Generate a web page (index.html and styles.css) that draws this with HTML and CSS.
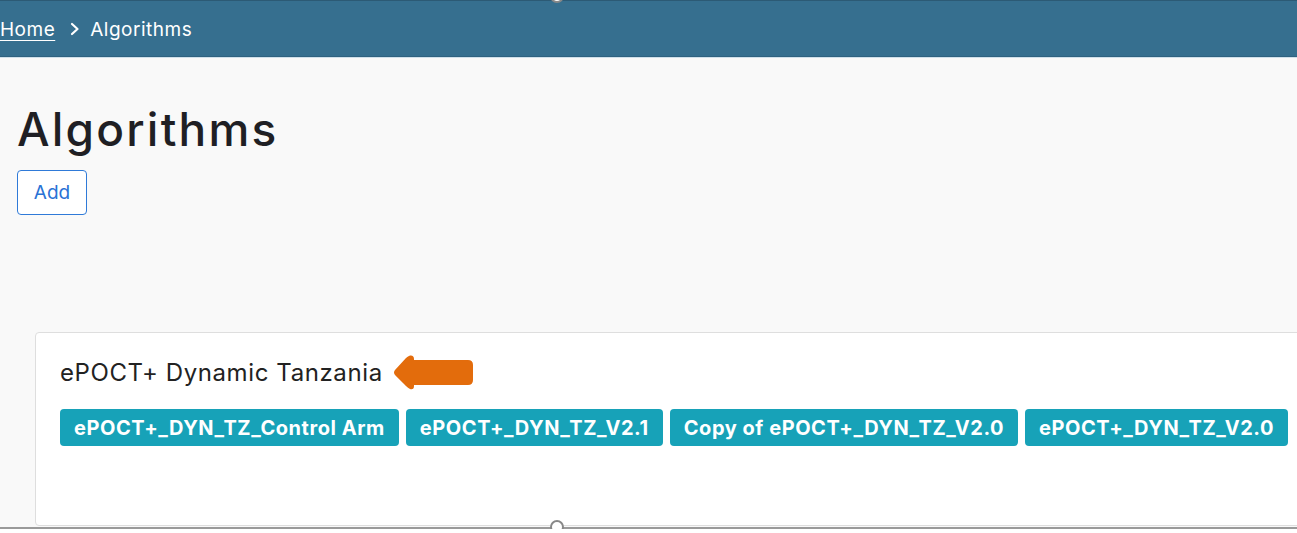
FILE: index.html
```html
<!DOCTYPE html>
<html lang="en">

<head>
    <meta charset="UTF-8">
    <meta name="viewport" content="width=device-width, initial-scale=1.0">
    <title>Algorithms</title>
    <link rel="stylesheet" href="styles.css">
</head>

<body>
    <div class="frame">
        <nav class="topbar">
            <a class="crumb-link" href="#">Home</a>
            <span class="crumb-sep">
                <svg width="12" height="14" viewBox="0 0 12 14">
                    <path d="M3 2 L8.5 7 L3 12" fill="none" stroke="#fff" stroke-width="2.2" stroke-linecap="round" stroke-linejoin="round" />
                </svg>
            </span>
            <span class="crumb-current">Algorithms</span>
        </nav>

        <main class="content">
            <h1 class="page-title">Algorithms</h1>
            <button class="btn-outline">Add</button>

            <section class="card">
                <div class="card-head">
                    <h2 class="card-title">ePOCT+ Dynamic Tanzania</h2>
                    <svg class="pointer" width="82" height="38" viewBox="0 0 82 38">
                        <path d="M22 7 L76 7 Q81 7 81 12 L81 27 Q81 32 76 32 L22 32 L22 33 Q22 37 18 36 Q16 35 14 33 L3 22 Q1 19.5 3 17 L14 5 Q16 3 18 2.5 Q22 2 22 6 Z" fill="#e36c0c" />
                    </svg>
                </div>
                <div class="badge-row">
                    <a class="badge" href="#">ePOCT+_DYN_TZ_Control Arm</a>
                    <a class="badge" href="#">ePOCT+_DYN_TZ_V2.1</a>
                    <a class="badge" href="#">Copy of ePOCT+_DYN_TZ_V2.0</a>
                    <a class="badge" href="#">ePOCT+_DYN_TZ_V2.0</a>
                </div>
            </section>
        </main>

        <div class="handle handle-top"></div>
        <div class="edge-line"></div>
        <div class="handle handle-bottom"></div>
    </div>
</body>

</html>
```

FILE: styles.css
```css
body {
    margin: 0;
    font-family: Inter, "Open Sans", sans-serif;
    background-color: #fff;
    overflow: hidden;
}

.frame {
    position: relative;
    height: 529px;
    background-color: #f9f9f9;
    overflow: hidden;
}

.topbar {
    display: flex;
    align-items: center;
    height: 54px;
    padding-top: 1px;
    border-top: 1px solid #2c5a75;
    background-color: #366f8f;
    box-shadow: 0 1px 0 #2f6280, 0 2px 0 #cfe0ea;
    color: #fff;
    font-size: 19px;
    letter-spacing: 0.5px;
}

.crumb-link {
    color: #fff;
    text-decoration: underline;
    text-underline-offset: 4px;
}

.crumb-sep {
    display: flex;
    margin: 0 9px 0 14px;
}

.content {
    padding: 43px 0 0 17px;
}

.page-title {
    margin: 0;
    font-size: 46px;
    font-weight: 500;
    line-height: 60px;
    color: #1f1f24;
    letter-spacing: 2.2px;
}

.btn-outline {
    display: block;
    width: 70px;
    height: 45px;
    margin-top: 11px;
    padding: 0;
    font-family: inherit;
    font-size: 19px;
    color: #2a72d5;
    background-color: #fff;
    border: 1.5px solid #2f7ad8;
    border-radius: 4px;
}

.card {
    box-sizing: border-box;
    height: 194px;
    margin: 117px -20px 0 18px;
    padding: 0 24px;
    background-color: #fff;
    border: 1px solid #dedede;
    border-radius: 4px;
}

.card-head {
    display: flex;
    align-items: center;
    height: 74px;
    padding-top: 2px;
}

.card-title {
    margin: 0 9px 0 0;
    font-size: 24px;
    font-weight: 400;
    letter-spacing: 0.6px;
    color: #222;
}

.badge-row {
    display: flex;
    gap: 7px;
}

.badge {
    display: flex;
    flex-shrink: 0;
    align-items: center;
    height: 37px;
    padding: 0 14px;
    font-size: 20px;
    font-weight: 700;
    white-space: nowrap;
    color: #fff;
    text-decoration: none;
    letter-spacing: 0.55px;
    background-color: #17a2b8;
    border-radius: 4px;
}

.handle {
    position: absolute;
    left: 550px;
    width: 10px;
    height: 10px;
    border: 2px solid #888;
    border-radius: 50%;
    background-color: #fff;
}

.handle-top {
    top: -11px;
}

.handle-bottom {
    top: 520px;
}

.edge-line {
    position: absolute;
    left: 0;
    right: 0;
    top: 527px;
    height: 2px;
    background-color: #9a9a9a;
}
```
